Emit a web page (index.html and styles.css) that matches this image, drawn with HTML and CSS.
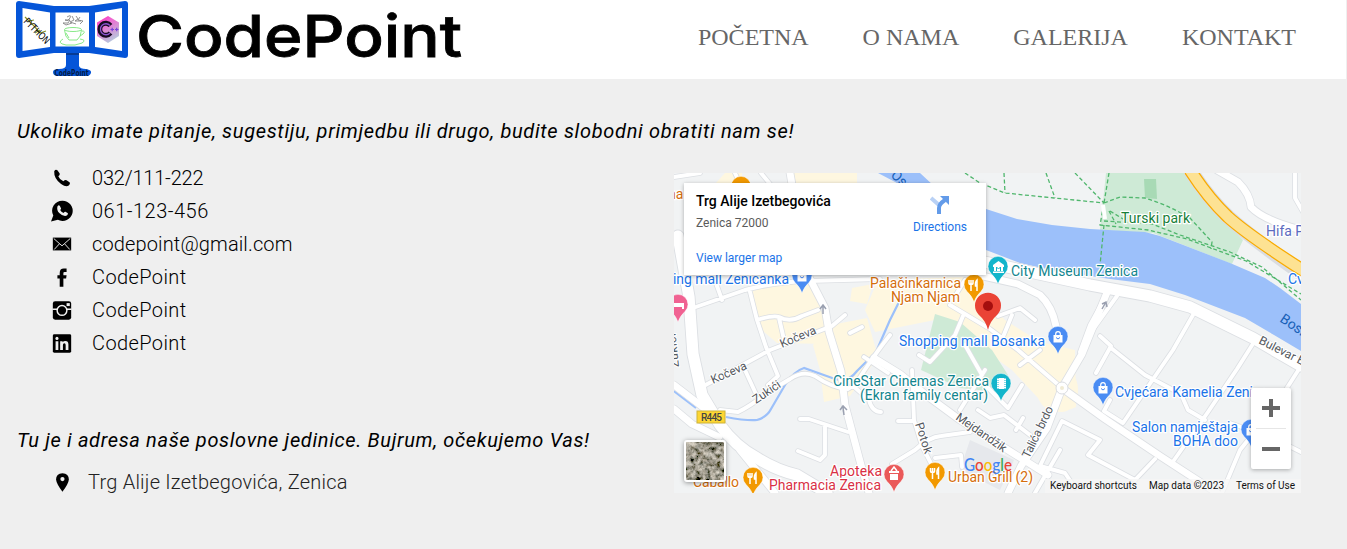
FILE: index.html
```html
<!DOCTYPE html>
<html lang="bs">
<head>
<meta charset="utf-8">
<title>CodePoint - Kontakt</title>
<link rel="stylesheet" href="styles.css">
</head>
<body>
<header class="header">
  <svg class="logo" width="480" height="79" viewBox="0 0 480 79">
    <path fill="#0555d8" d="M19 1 54 6H89L125 1Q128 1 128 4V55Q128 58 125 58L89 53H79V66Q80 69 86 69Q92 70 91 73Q90 76 86 76H58Q53 76 53 72Q53 69 59 69Q66 69 66 65V53H54L19 58Q16 58 16 55V4Q16 1 19 1Z"/>
    <path fill="#fff" d="M22.500 8 50 12.500V47L22.500 51ZM55.500 12.500H89V46.500H55.500ZM95 12.500 122 8V51L95 47Z"/>
    <path fill="#063b94" d="M66 53H79V55H66Z"/>
    <path d="M25 17 30 22 35 27 40 33 46 31M29 21 34 20M35 33 40 30" fill="none" stroke="#8b9428" stroke-width="1.200"/>
    <text class="python" transform="translate(23 22) rotate(45)" textLength="32" lengthAdjust="spacingAndGlyphs">PYTHON</text>
    <g fill="none" stroke="#7be57b" stroke-width=".9"><ellipse cx="73" cy="29.500" rx="8.500" ry="2"/><path d="M64.500 30Q65 37 69 40H77Q81 37 81.500 30M82 31Q86 31 83 34L80 36M63 39Q56 43 66 45Q76 46 82 43Q87 40 80 39M66 33 69 38"/></g>
    <path d="M67 17Q72 14 70 18T65 20L70 20 68 23 63 23 66 25 72 23M72 16 74 20 70 22 76 24M76 16 78 19 75 21 81 21M80 17 78 20 83 21 80 24" fill="none" stroke="#777" stroke-width=".8"/>
    <defs><linearGradient id="hex" x1="0" y1="0" x2=".5" y2="1"><stop offset="0" stop-color="#ff20bd"/><stop offset=".35" stop-color="#ef67d0"/><stop offset="1" stop-color="#b9c4dc"/></linearGradient></defs>
    <path fill="url(#hex)" d="M108 16 119 22.500V36L108 43 97 36V22.500Z"/>
    <path d="M110.500 25.500A6 6 0 1 0 110.500 33" fill="none" stroke="#160a20" stroke-width="4.800"/>
    <path d="M110 25.500A5.500 5.500 0 1 0 110 33" fill="none" stroke="#8c54cf" stroke-width="1.300"/>
    <path d="M110.500 29.500H114M112.200 27.800V31.200M115 29.500H118.500M116.700 27.800V31.200" stroke="#7841db" stroke-width="1.200"/>
    <text class="stand" x="54.500" y="75.500" textLength="34" lengthAdjust="spacingAndGlyphs">CodePoint</text>
    <text class="wordmark" x="136" y="56.500" textLength="326" lengthAdjust="spacingAndGlyphs">CodePoint</text>
  </svg>
  <nav class="nav"><a>POČETNA</a><a>O NAMA</a><a>GALERIJA</a><a>KONTAKT</a></nav>
</header>
<main class="main">
  <p class="intro first">Ukoliko imate pitanje, sugestiju, primjedbu ili drugo, budite slobodni obratiti nam se!</p>
  <div class="columns">
    <section class="contact">
      <ul class="list">
        <li><svg class="icon" viewBox="0 0 24 24"><path d="M3.500 4.500Q5 2 7 3.500L9.500 7Q10 8.500 8 10Q9.500 14 13.500 15.500Q15.500 13.500 17 14.500L20.500 17Q21.500 18.500 19 20.500Q16 22 11 18.500Q3 12.500 3.500 4.500Z"/></svg><span class="phone">032/111-222</span></li>
        <li><svg class="icon" viewBox="0 0 24 24"><path d="M12.500 .800A11 11 0 1 1 7.500 21.500L0 23.500 2.500 17A11 11 0 0 1 12.500 .800Z"/><path fill="#efefef" d="M7 7Q8.500 5 9.700 6.500L11 9.200Q11 10.200 10 11Q11 13.200 13.700 14.300Q15 12.500 15.800 12.900L18.500 14.500Q18.300 17.500 15.300 17.500Q12 17.500 9 14.300Q6 11 7 7Z"/></svg><span class="mobile">061-123-456</span></li>
        <li><svg class="icon" viewBox="0 0 24 24"><path d="M2 5H22V19H2Z"/><path d="M3 6 12 14 21 6M3.500 18 9 12M20.500 18 15 12" fill="none" stroke="#efefef" stroke-width="1"/></svg><span class="mail">codepoint@gmail.com</span></li>
        <li><svg class="icon" viewBox="0 0 24 24"><path d="M9.500 22.500V13.500H7V10H9.500V7.500Q9.500 2.800 14 2.800H17V6.500H14.800Q13.500 6.500 13.500 7.700V10H17L16.500 13.500H13.500V22.500Z"/></svg><span>CodePoint</span></li>
        <li><svg class="icon" viewBox="0 0 24 24"><rect x="2" y="2.500" width="20" height="20" rx="2.500"/><path d="M1.500 11.200H7M17 11.200H22.500" stroke="#efefef" stroke-width="1.700"/><circle cx="12" cy="12.500" r="5.300" fill="none" stroke="#efefef" stroke-width="1.600"/><rect x="17" y="4.500" width="3.500" height="3.200" fill="#efefef"/></svg><span>CodePoint</span></li>
        <li><svg class="icon" viewBox="0 0 24 24"><rect x="2" y="2.500" width="20" height="20" rx="1.500"/><path fill="#efefef" d="M5 10H8V19.500H5ZM10 10H12.700V11.300Q13.600 9.700 15.700 9.700Q19 9.700 19 13.500V19.500H16V14.300Q16 12.300 14.500 12.300Q13 12.300 13 14.300V19.500H10Z"/><circle cx="6.500" cy="7" r="1.700" fill="#efefef"/></svg><span>CodePoint</span></li>
      </ul>
      <p class="intro second">Tu je i adresa naše poslovne jedinice. Bujrum, očekujemo Vas!</p>
      <ul class="list address">
        <li><svg class="icon" viewBox="0 0 24 24"><path fill-rule="evenodd" d="M12.500 2.500Q19.500 3 19.500 9.200Q19 14 12.500 22.500Q6 14 5.500 9.200Q5.500 3 12.500 2.500ZM12.500 6.500A2.300 2.300 0 1 0 12.500 11.100A2.300 2.300 0 1 0 12.500 6.500Z"/></svg><span>Trg Alije Izetbegovića, Zenica</span></li>
      </ul>
    </section>
    <div class="map">
      <svg class="tiles" width="627" height="320" viewBox="674 173 627 320">
        <defs>
          <path id="pin" d="M0 14Q-2 8-7 3.500A10 10 0 1 1 7 3.500Q2 8 0 14Z"/>
          <g id="bag"><path d="M-4.500-5H4.500V2.500H-4.500Z" fill="#fff"/><path d="M-2.300-5V-6A2.300 2.300 0 0 1 2.300-6V-5" fill="none" stroke="#fff" stroke-width="1.200"/><path d="M-2-2.500Q0 .5 2-2.500" fill="none" stroke="#4285f4"/></g>
          <path id="food" d="M-4.500-9V-6Q-4.500-4.500-2.500-4.500M-2.500-9V2M-.5-9V-6Q-.5-4.500-2.500-4.500M3.500 2V-9Q1.500-7 2-3H3.500" fill="none" stroke="#fff" stroke-width="1.500"/>
          <g id="small"><path d="M674 237 680 248 692 243M690 309 745 290Q775 282 808 281L880 279M712 272 722 300M735 173 740 184M761 173 770 184M674 177 700 173M700 388 770 350 832 326 845 315M750 292 757 320 766 347 778 376 768 385M757 320Q773 315 779 317 790 323 802 316L818 310M779 318 785 344M745 370 756 394M720 410 738 412Q752 405 768 392L790 379Q803 370 815 376 832 388 848 389 855 386 864 371 878 350 890 335M800 419 809 419 848 432M825 425V455L820 460 798 451M864 357 888 373M852 385 869 400Q872 412 881 412M898 421H914M892 464 915 450Q929 437 941 436L970 432M935 458 961 455 962 467M912 370 914 420 922 446 937 475M950 305 990 329 1018 350 1062 388M955 296 965 280M963 316 955 335 930 362 919 355M998 316 1020 308 1035 320M1012 315 1003 337M965 345 982 375M1020 365 1040 350M960 410 985 370M978 378 1008 408 1022 385M978 410 990 418 1004 415 1030 435M1016 430 1023 418M1108 292 1090 325 1080 352M1117 296 1094 328M1100 336 1111 346 1096 373M1111 348 1145 375 1181 394 1188 410 1205 420M1193 315 1173 350 1123 423 1104 411 1110 400M1256 339 1237 369 1208 412 1172 463M1301 366 1276 405 1240 450 1222 493M1080 430 1062 421 1038 470M1060 450 1035 493M1074 427 1100 440 1088 455 1135 480 1155 459M1040 466 1065 473 1075 488M1301 452 1275 439 1230 423M862 327 850 333M1295 173 1295 198 1303 212"/></g>
          <g id="medium"><path d="M809 277 825 308 829 332 841 371 845 405 861 465 869 493M790 173 808 277M874 358 900 374 926 395 960 420 1016 455 1048 475M1108 290 1082 354 1062 388 1047 428 1021 466 1008 493M1062 388 1105 419 1160 456 1217 493M978 275 1018 284 1040 295Q1052 306 1056 326M1217 170 1238 182Q1250 194 1251 207 1263 220 1301 230M674 385 704 408M674 409 692 424 719 437M740 450 775 493"/></g>
          <g id="large"><path d="M678 236 689 297 693 354 702 395 720 425Q735 446 757 458 776 470 797 475L827 493M925 249 998 265 1090 285 1150 296 1190 307 1253 338 1301 366"/></g>
          <filter id="terrain" x="0" y="0" width="100%" height="100%"><feTurbulence type="fractalNoise" baseFrequency=".2" numOctaves="5" seed="8"/><feColorMatrix values="1.100 .5 0 0 -.45  1 .5 0 0 -.42  .9 .5 0 0 -.43  0 0 0 0 1"/></filter>
        </defs>
        <rect x="674" y="173" width="627" height="320" fill="#f1f3f4"/>
        <g fill="#fef7e0"><path d="M752 286 812 282 828 318 827 344 777 343 758 327ZM813 345 831 325 867 318 878 357 850 396 824 402 820 370ZM852 288 873 284 867 304 850 301ZM878 280 963 277 990 304 1005 320 1040 342 1075 350 1076 407Q1048 420 1038 398L1012 370 970 340 935 320 875 332 865 310ZM787 173H857V184H787ZM715 184 725 173H742V184Z"/><ellipse cx="1062" cy="390" rx="16" ry="22"/></g>
        <path fill="#e6e8ec" d="M970 440 1014 460 1000 490 960 470Z"/>
        <g fill="#ceead6"><path d="M935 314 960 322 992 350 1008 375 997 392 960 388 921 370ZM1106 173H1184Q1194 191 1214 209L1243 240 1232 264 1153 233 1100 230Z"/></g>
        <path fill="#a8dab5" d="M1144 179H1156L1157 199 1145 198Z"/>
        <path fill="#9cc0fa" d="M878 173H920L934 186 986 209 1017 219 1052 225 1090 229 1145 232 1160 236 1230 263 1265 278 1280 288 1301 304V351L1274 335 1245 318 1185 295 1150 284 1110 279 1050 270 1020 263 986 250 920 215 897 183Z"/>
        <path d="M674 391 696 408M726 417Q747 421 757 420 767 417 771 409L785 385Q794 371 804 368L835 379Q848 383 857 371L876 352 890 320 900 300" fill="none" stroke="#9cc0fa" stroke-width="2.200"/>
        <g class="casing"><use href="#small" stroke-width="5.500"/><use href="#medium" stroke-width="8.500"/><use href="#large" stroke-width="13"/></g>
        <g class="road"><use href="#small" stroke-width="3.900"/><use href="#medium" stroke-width="6.900"/><use href="#large" stroke-width="11.200"/></g>
        <circle cx="1062" cy="388" r="6" fill="#fff" stroke="#dadce0"/><circle cx="1062" cy="388" r="2" fill="#f1ebd4"/>
        <g fill="none"><path d="M1190 170Q1208 198 1228 217 1248 235 1301 273" stroke="#dadce0" stroke-width="15"/><path d="M1190 170Q1208 198 1228 217 1248 235 1304 271" stroke="#f9ab00" stroke-width="13"/><path d="M1190 170Q1208 198 1228 217 1248 235 1304 271" stroke="#fde293" stroke-width="10.500"/></g>
        <path class="trail" d="M965 173 980 183 1005 193 1054 198 1104 203M1004 173 1005 193M1046 173 1055 198M1075 173 1104 203M1109 173 1104 203 1100 225 1148 230 1187 239 1246 261 1301 294M1104 203 1120 197 1145 198Q1168 205 1190 218L1212 242 1211 249M1104 221 1152 224 1180 235 1230 252 1262 267 1301 300M1104 225 1100 265M1109 211 1116 224M1110 211 1123 219"/>
        <path d="M1103 205 1105 219" stroke="#fff" stroke-width="4"/>
        <path d="M823 314V306M820 309 823 305 826 309M844 415 843 407M840 410 843 406 847 410M1102 309 1106 302M1102 304 1106 302 1107 307" fill="none" stroke="#9aa0b0" stroke-width="1.500"/>
        <g class="roadname"><text transform="translate(713 384) rotate(-24)" textLength="38">Kočeva</text><text transform="translate(782 348) rotate(-23)" textLength="38">Kočeva</text><text transform="translate(756 404) rotate(-34)" textLength="31">Zukići</text><text transform="translate(679 367) rotate(-96)" textLength="34">Zukići</text><text transform="translate(955 419) rotate(35)" textLength="59">Mejdandžik</text><text transform="translate(915 424) rotate(72)" textLength="32">Potok</text><text transform="translate(1029 459) rotate(-64)" textLength="56">Talića brdo</text><text transform="translate(1258 343) rotate(27)">Bulevar Edhema</text></g>
        <g font-size="14" fill="#175fb7"><text transform="translate(890 176) rotate(43)">Osna</text><text transform="translate(1279 321) rotate(34)">Bosna</text></g>
        <rect x="697" y="411" width="28" height="12" fill="#fdd633" stroke="#ceb339"/><text x="701" y="420.500" font-size="10" font-weight="500" fill="#444" textLength="21">R445</text>
        <g class="place">
          <g fill="#d56e0c"><text x="668" y="199">na</text><text x="870" y="288" textLength="91">Palačinkarnica</text><text x="891" y="302" textLength="69">Njam Njam</text><text x="693" y="487" textLength="46">Caballo</text><text x="948" y="482" textLength="85">Urban Grill (2)</text></g>
          <g fill="#1a73e8"><text x="673" y="284" textLength="116">ing mall Zeničanka</text><text x="899" y="346" textLength="146">Shopping mall Bosanka</text><text x="1115" y="397">Cvjećara Kamelia Zenica</text><text x="1132" y="432" textLength="106">Salon namještaja</text><text x="1173" y="446" textLength="65">BOHA doo</text><text x="1288" y="284">Cvjećara</text></g>
          <g fill="#12858e"><text x="1011" y="276" textLength="127">City Museum Zenica</text><text x="833" y="386" textLength="156">CineStar Cinemas Zenica</text><text x="860" y="400" textLength="128">(Ekran family centar)</text></g>
          <text x="1121" y="223" fill="#188038" textLength="69">Turski park</text><text x="1266" y="236" fill="#5c6bc0">Hifa Petrol</text>
          <g fill="#d93045"><text x="830" y="476" textLength="52">Apoteka</text><text x="769" y="490" textLength="112">Pharmacia Zenica</text></g>
        </g>
        <g stroke="#fff" stroke-width=".5"><g fill="#f29900"><use href="#pin" x="974" y="288"/><use href="#pin" x="753" y="481"/><use href="#pin" x="935" y="476"/><use href="#pin" x="741" y="190"/></g><g fill="#4a8cf3"><use href="#pin" x="802" y="279"/><use href="#pin" x="1058" y="340"/><use href="#pin" x="1103" y="391"/><use href="#pin" x="1251" y="433"/></g><g fill="#12b5cb"><use href="#pin" x="998" y="270"/><use href="#pin" x="1001" y="387"/></g><use href="#pin" x="894" y="478" fill="#ea5959"/><use href="#pin" x="678" y="308" fill="#f06292"/></g>
        <use href="#bag" x="802" y="279"/><use href="#bag" x="1058" y="340"/><use href="#bag" x="1103" y="391"/><use href="#bag" x="1251" y="433"/><use href="#food" x="973.500" y="289"/><use href="#food" x="752.500" y="482"/><use href="#food" x="935" y="477"/>
        <path fill="#fff" d="M993 265 998.500 261 1004 265V267H993ZM994 267H1003V271H994ZM993 271.500H1004V273H993ZM997 378H1006V389H997ZM889 471H899V473H889ZM890 474H898V480H890ZM674 303H684V309H682V307H674Z"/><path d="M996.500 271V267L998.500 269 1000.500 267V271" fill="none" stroke="#12b5cb"/><path d="M998 378V389M1005 378V389" stroke="#12b5cb" stroke-dasharray="1 1"/><path d="M891 471 894 467 897 471" fill="none" stroke="#fff" stroke-width="1.500"/>
        <path fill="#ea4335" d="M988 330Q986 321 978.500 314.500A13 13 0 1 1 997.500 314.500Q990 321 988 330Z"/><circle cx="988" cy="306" r="5" fill="#a50e0e"/>
        <text class="google" x="964" y="471" textLength="48" lengthAdjust="spacingAndGlyphs"><tspan fill="#4285f4">G</tspan><tspan fill="#ea4335">o</tspan><tspan fill="#fbbc04">o</tspan><tspan fill="#4285f4">g</tspan><tspan fill="#34a853">l</tspan><tspan fill="#ea4335">e</tspan></text>
        <path fill="#f5f5f5" fill-opacity=".75" d="M1045 479H1301V493H1045Z"/>
        <g font-size="10" fill="#111"><text x="1050" y="489" textLength="87">Keyboard shortcuts</text><text x="1149" y="489" textLength="75">Map data ©2023</text><text x="1236" y="489" textLength="59">Terms of Use</text></g>
      </svg>
      <div class="card">
        <div class="place-info"><strong>Trg Alije Izetbegovića</strong><span>Zenica 72000</span><a>View larger map</a></div>
        <div class="directions"><svg width="20" height="20" viewBox="0 0 20 20"><path fill="none" stroke="#b9d1f5" stroke-width="4" d="M1 3 9 10"/><path fill="none" stroke="#639be9" stroke-width="4" d="M9 19V13Q9 9 15 5"/><path fill="#639be9" d="M10 1H19V10Z"/></svg><a>Directions</a></div>
      </div>
      <svg class="satellite" width="38" height="38" viewBox="0 0 38 38"><rect width="38" height="38" fill="#665f50" filter="url(#terrain)"/><path d="M0 9 12 16 25 20 38 33M20 0 14 16" fill="none" stroke="#b3a699" stroke-opacity=".5"/></svg>
      <div class="zoom"><i class="plus"></i><i class="minus"></i></div>
    </div>
  </div>
</main>
</body>
</html>
```
FILE: styles.css
```css
* { box-sizing: border-box; }
body { margin: 0; background: #efefef; font-family: Roboto, "Noto Sans", sans-serif; color: #000; overflow: hidden; }
.header { height: 79px; margin-right: 1px; background: #fff; display: flex; align-items: center; justify-content: space-between; padding-right: 50px; }
.logo { display: block; }
.wordmark { font: 500 58px Inter, sans-serif; stroke: #000; stroke-width: .8px; }
.python { font: 10px "DejaVu Sans", sans-serif; }
.stand { font: bold 9px "DejaVu Sans", sans-serif; fill: #041c48; }
.nav { display: flex; gap: 54px; font: 24px "Liberation Serif", serif; color: #666; padding-bottom: 4px; }
.main { padding-top: 37px; }
.intro { margin: 0; padding-left: 17px; font-size: 20px; font-style: italic; line-height: 30px; white-space: nowrap; }
.first { letter-spacing: .68px; }
.second { margin-top: 66px; letter-spacing: .65px; }
.columns { display: grid; grid-template-columns: 674px 627px; margin-top: 15px; }
.list { list-style: none; margin: 0; padding: 0 0 0 51px; font-size: 20px; font-weight: 300; letter-spacing: .4px; }
.list li { display: flex; align-items: center; gap: 19px; height: 33px; white-space: nowrap; }
.list .phone { letter-spacing: -.2px; }
.list .mobile { letter-spacing: .5px; }
.list .mail { letter-spacing: .13px; }
.address { margin-top: 10px; color: #222; letter-spacing: .23px; }
.address li { gap: 15px; }
.icon { width: 22px; height: 22px; flex: none; }
.map { position: relative; width: 627px; height: 320px; margin-top: 12px; overflow: hidden; }
.tiles { display: block; }
.casing, .road, .trail { fill: none; stroke-linejoin: round; stroke-linecap: round; }
.casing { stroke: #dcdfe3; }
.road { stroke: #fff; }
.trail { stroke: #4fb66c; stroke-width: 1.3px; stroke-dasharray: 4 2.5; stroke-linecap: butt; }
.place { font-size: 14px; }
.place text { paint-order: stroke; stroke: #fff; stroke-width: 2.5px; stroke-linejoin: round; }
.roadname { font-size: 12px; fill: #55595e; }
.roadname text { paint-order: stroke; stroke: #fff; stroke-width: 2px; }
.google { font: 500 17px Lato, sans-serif; }
.card { position: absolute; top: 10px; left: 10px; width: 302px; height: 92px; padding: 9px 19px 0 12px; display: flex; justify-content: space-between; background: #fff; box-shadow: 0 1px 4px rgba(0, 0, 0, .3); font-size: 12px; }
.place-info { display: flex; flex-direction: column; }
.place-info strong { font-size: 14px; font-weight: 500; line-height: 19px; }
.place-info span { color: #5b5b5b; line-height: 14px; margin-top: 5px; }
.card a { color: #1a73e8; line-height: 14px; }
.place-info a { margin-top: 21px; }
.directions { display: flex; flex-direction: column; align-items: center; gap: 5px; padding-top: 3px; }
.satellite { position: absolute; left: 10px; top: 267px; width: 42px; height: 42px; border: 2px solid #fff; border-radius: 3px; background: #fff; box-shadow: 0 1px 5px rgba(0, 0, 0, .4); }
.zoom { position: absolute; right: 10px; top: 215px; width: 40px; height: 81px; padding: 0 5px; border-radius: 2px; background: #fff; box-shadow: 0 1px 4px rgba(0, 0, 0, .3); display: grid; grid-template-rows: 41px 40px; }
.plus { border-bottom: 1px solid #e6e6e6; background: linear-gradient(#666, #666) 6px 18px / 18px 4px no-repeat, linear-gradient(#666, #666) 13px 11px / 4px 18px no-repeat; }
.minus { background: linear-gradient(#666, #666) 6px 18px / 18px 4px no-repeat; }
```
